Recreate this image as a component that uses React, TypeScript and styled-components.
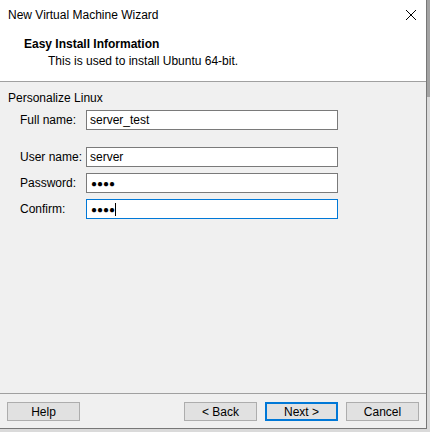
import React from "react"
import styled, { createGlobalStyle } from "styled-components"

const GlobalStyle = createGlobalStyle`
  html, body {
    margin: 0;
    padding: 0;
    background: #dadada;
  }
  * {
    box-sizing: border-box;
  }
`

const FONT = `"Liberation Sans", Arial, sans-serif`

const Screen = styled.div`
  display: flex;
  width: 430px;
  height: 432px;
  overflow: hidden;
  font-family: ${FONT};
  font-size: 12px;
  color: #000;
`

const Window = styled.div`
  display: flex;
  flex-direction: column;
  width: 427px;
  height: 429px;
  flex-shrink: 0;
  background: #f0f0f0;
  border-right: 1px solid #777;
  border-bottom: 1px solid #777;
`

const Backdrop = styled.div`
  flex: 1;
  background: linear-gradient(to bottom, #a3a3a3 0, #a3a3a3 97px, #dadada 97px);
`

const TitleBar = styled.div`
  display: flex;
  align-items: center;
  justify-content: space-between;
  height: 30px;
  padding: 0 10px 0 8px;
  background: #fff;
  font-size: 12px;
`

const CloseIcon = styled.svg`
  width: 10px;
  height: 10px;
`

const Header = styled.div`
  height: 52px;
  padding: 6px 0 0 24px;
  background: #fff;
  border-bottom: 1px solid #a0a0a0;
`

const HeaderTitle = styled.div`
  font-weight: bold;
  line-height: 16px;
  margin-bottom: 1px;
`

const HeaderText = styled.div`
  line-height: 16px;
  padding-left: 24px;
`

const Body = styled.div`
  flex: 1;
  padding: 8px 0 0 8px;
`

const GroupTitle = styled.div`
  line-height: 16px;
  margin-bottom: 4px;
`

const Form = styled.div`
  display: grid;
  grid-template-columns: 66px 252px;
  row-gap: 6px;
  padding-left: 12px;
  align-items: center;
`

const Spacer = styled.div`
  grid-column: 1 / -1;
  height: 5px;
`

const Label = styled.label`
  line-height: 16px;
`

const Field = styled.div<{ $focused?: boolean }>`
  display: flex;
  align-items: center;
  height: 20px;
  padding-left: 3px;
  background: #fff;
  border: 1px solid ${(p) => (p.$focused ? "#0078d7" : "#7a7a7a")};
`

const Dots = styled.span`
  font-size: 10px;
  letter-spacing: 0;
  padding-left: 1px;
`

const Caret = styled.span`
  display: inline-block;
  width: 1px;
  height: 13px;
  background: #000;
`

const Footer = styled.div`
  display: flex;
  gap: 8px;
  padding: 8px 7px 7px;
  border-top: 1px solid #a0a0a0;
`

const Button = styled.button<{ $primary?: boolean }>`
  width: 73px;
  height: 19px;
  padding: 0;
  font-family: ${FONT};
  font-size: 12px;
  color: #000;
  background: #e1e1e1;
  border: ${(p) => (p.$primary ? "2px solid #0078d7" : "1px solid #adadad")};
`

const Push = styled.div`
  flex: 1;
`

export default function App() {
  return (
    <>
      <GlobalStyle />
      <Screen>
        <Window>
          <TitleBar>
            <span>New Virtual Machine Wizard</span>
            <CloseIcon viewBox="0 0 10 10">
              <path d="M0 0L10 10M10 0L0 10" stroke="#000" strokeWidth="1" />
            </CloseIcon>
          </TitleBar>
          <Header>
            <HeaderTitle>Easy Install Information</HeaderTitle>
            <HeaderText>This is used to install Ubuntu 64-bit.</HeaderText>
          </Header>
          <Body>
            <GroupTitle>Personalize Linux</GroupTitle>
            <Form>
              <Label>Full name:</Label>
              <Field>server_test</Field>
              <Spacer />
              <Label>User name:</Label>
              <Field>server</Field>
              <Label>Password:</Label>
              <Field>
                <Dots>●●●●</Dots>
              </Field>
              <Label>Confirm:</Label>
              <Field $focused>
                <Dots>●●●●</Dots>
                <Caret />
              </Field>
            </Form>
          </Body>
          <Footer>
            <Button>Help</Button>
            <Push />
            <Button>&lt; Back</Button>
            <Button $primary>Next &gt;</Button>
            <Button>Cancel</Button>
          </Footer>
        </Window>
        <Backdrop />
      </Screen>
    </>
  )
}
